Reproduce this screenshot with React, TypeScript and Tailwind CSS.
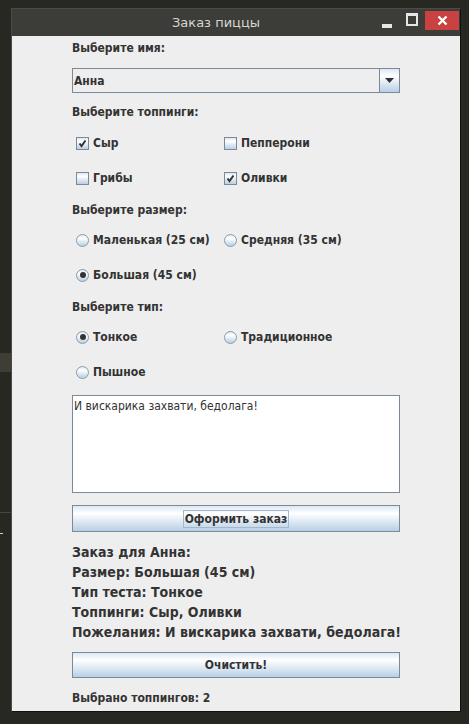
import React, { useState } from "react";

const metalGrad = "bg-linear-to-b from-[#dde8f3] via-white via-30% to-[#b8cfe5]";

const Check = ({ checked, label, onClick }: { checked: boolean; label: string; onClick: () => void }) => (
  <div className="flex items-center h-5 pl-1 gap-1 cursor-default whitespace-nowrap" onClick={onClick}>
    <div className={`w-[13px] h-[13px] shrink-0 border border-[#7a8a99] ${metalGrad} flex items-center justify-center`}>
      {checked && (
        <svg width="9" height="9" viewBox="0 0 9 9">
          <path d="M1.5 4.5 L3.5 7 L7.5 1.5" stroke="#333333" strokeWidth="2" fill="none" />
        </svg>
      )}
    </div>
    <span className="text-[12px] font-bold text-[#333333]">{label}</span>
  </div>
);

const Radio = ({ checked, label, onClick }: { checked: boolean; label: string; onClick: () => void }) => (
  <div className="flex items-center h-5 pl-1 gap-1 cursor-default whitespace-nowrap" onClick={onClick}>
    <div className={`w-[13px] h-[13px] shrink-0 rounded-full border border-[#8c9aa8] ${metalGrad} flex items-center justify-center`}>
      {checked && <div className="w-[6px] h-[6px] rounded-full bg-[#333333]" />}
    </div>
    <span className="text-[12px] font-bold text-[#333333]">{label}</span>
  </div>
);

const Label = ({ children, mt }: { children: React.ReactNode; mt: string }) => (
  <div className={`${mt} h-4 leading-4 text-[12px] font-bold text-[#333333] whitespace-nowrap`}>{children}</div>
);

export default function App() {
  const [toppings, setToppings] = useState<Record<string, boolean>>({
    "Сыр": true,
    "Пепперони": false,
    "Грибы": false,
    "Оливки": true,
  });
  const [size, setSize] = useState("Большая (45 см)");
  const [crust, setCrust] = useState("Тонкое");

  const toggle = (k: string) => setToppings({ ...toppings, [k]: !toppings[k] });
  const count = Object.values(toppings).filter(Boolean).length;

  return (
    <div className="w-[469px] h-[724px] bg-[#272822] relative overflow-hidden font-['DejaVu_Sans_Condensed','DejaVu_Sans',sans-serif]">
      {/* desktop behind the window */}
      <div className="absolute left-0 top-[353px] w-[11px] h-[19px] bg-[#3e3e35]" />
      <div className="absolute left-0 top-[512px] w-[11px] h-px bg-[#45463f]" />
      <div className="absolute left-0 top-[533px] w-[3px] h-px bg-[#d0d0d0]" />

      <div className="relative ml-[11px] mt-[8px] w-[450px] border-l border-t border-[#4a4b45] border-r border-r-[#111111] border-b border-b-[#111111]">
        {/* title bar */}
        <div className="h-[27px] bg-[#3c3d38] flex items-start">
          <div className="flex-1 self-center pl-[160px] text-[13px] text-[#d6d6d2] leading-4 font-['DejaVu_Sans',sans-serif]">Заказ пиццы</div>
          <div className="mt-[15px] w-[10px] h-[4px] bg-[#e6e6e6]" />
          <div className="ml-[14px] mt-[4px] w-[12px] h-[13px] border-2 border-t-[3px] border-[#e6e6e6]" />
          <div className="ml-[7px] mt-[2px] mr-[1px] w-[34px] h-[19px] bg-[#c94141] flex items-center justify-center">
            <svg width="11" height="11" viewBox="0 0 11 11">
              <path d="M1.5 1.5 L9.5 9.5 M9.5 1.5 L1.5 9.5" stroke="#ffffff" strokeWidth="2.4" />
            </svg>
          </div>
        </div>

        {/* form body */}
        <div className="h-[675px] bg-[#eeeeee] pl-[60px] w-[448px]">
          <div className="w-[328px] flex flex-col">
            <Label mt="mt-[4px]">Выберите имя:</Label>
            <div className="mt-[12px] h-[25px] flex border border-[#7a8a99] bg-[#eeeeee]">
              <div className="flex-1 flex items-center pl-[1px] text-[12px] font-bold text-[#333333]">Анна</div>
              <div className={`w-[20px] border-l border-[#7a8a99] ${metalGrad} flex items-center justify-center`}>
                <svg width="9" height="5" viewBox="0 0 9 5">
                  <path d="M0 0 H9 L4.5 5 Z" fill="#333333" />
                </svg>
              </div>
            </div>

            <Label mt="mt-[11px]">Выберите топпинги:</Label>
            <div className="mt-[13px] grid grid-cols-[148px_1fr]">
              <Check checked={toppings["Сыр"]} label="Сыр" onClick={() => toggle("Сыр")} />
              <Check checked={toppings["Пепперони"]} label="Пепперони" onClick={() => toggle("Пепперони")} />
            </div>
            <div className="mt-[15px] grid grid-cols-[148px_1fr]">
              <Check checked={toppings["Грибы"]} label="Грибы" onClick={() => toggle("Грибы")} />
              <Check checked={toppings["Оливки"]} label="Оливки" onClick={() => toggle("Оливки")} />
            </div>

            <Label mt="mt-[14px]">Выберите размер:</Label>
            <div className="mt-[12px] grid grid-cols-[148px_1fr]">
              <Radio checked={size === "Маленькая (25 см)"} label="Маленькая (25 см)" onClick={() => setSize("Маленькая (25 см)")} />
              <Radio checked={size === "Средняя (35 см)"} label="Средняя (35 см)" onClick={() => setSize("Средняя (35 см)")} />
            </div>
            <div className="mt-[15px]">
              <Radio checked={size === "Большая (45 см)"} label="Большая (45 см)" onClick={() => setSize("Большая (45 см)")} />
            </div>

            <Label mt="mt-[14px]">Выберите тип:</Label>
            <div className="mt-[12px] grid grid-cols-[148px_1fr]">
              <Radio checked={crust === "Тонкое"} label="Тонкое" onClick={() => setCrust("Тонкое")} />
              <Radio checked={crust === "Традиционное"} label="Традиционное" onClick={() => setCrust("Традиционное")} />
            </div>
            <div className="mt-[15px]">
              <Radio checked={crust === "Пышное"} label="Пышное" onClick={() => setCrust("Пышное")} />
            </div>

            <div className="mt-[13px] h-[98px] bg-white border border-[#7a8a99] px-px pt-[2px] text-[12px] leading-4 text-[#333333]">
              И вискарика захвати, бедолага!
            </div>

            <div className={`mt-[12px] h-[27px] border border-[#7a8a99] ${metalGrad} flex items-center justify-center`}>
              <span className="border border-[#a3b8cc] px-px h-[18px] leading-4 text-[12px] font-bold text-[#333333]">Оформить заказ</span>
            </div>

            <div className="mt-[10px] text-[14px] font-bold leading-5 text-[#333333] whitespace-nowrap">
              <div>Заказ для Анна:</div>
              <div>Размер: {size}</div>
              <div>Тип теста: {crust}</div>
              <div>Топпинги: Сыр, Оливки</div>
              <div>Пожелания: И вискарика захвати, бедолага!</div>
            </div>

            <div className={`mt-[10px] h-[26px] border border-[#7a8a99] ${metalGrad} flex items-center justify-center text-[12px] font-bold text-[#333333]`}>
              Очистить!
            </div>

            <Label mt="mt-[12px]">Выбрано топпингов: {count}</Label>
          </div>
        </div>
      </div>
    </div>
  );
}
